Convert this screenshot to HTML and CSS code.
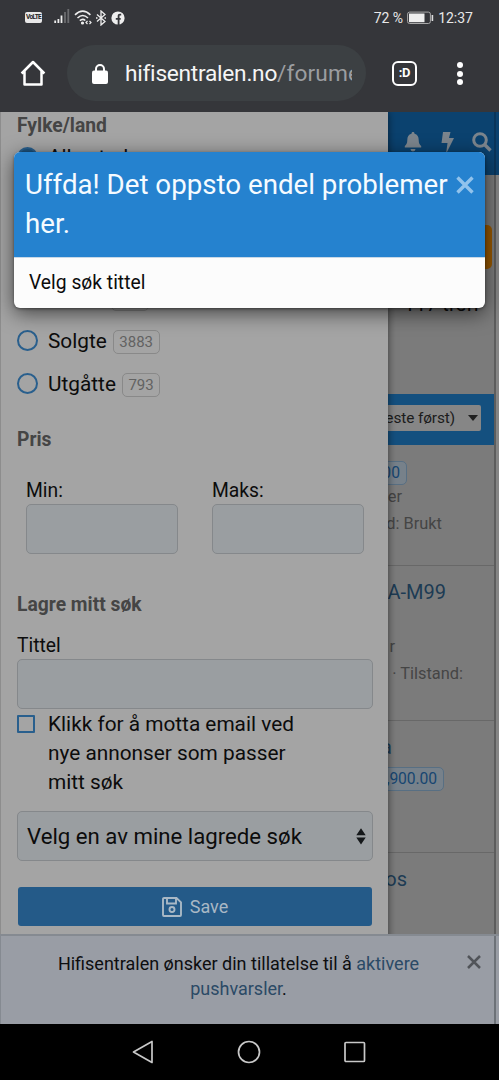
FILE: index.html
```html
<!DOCTYPE html>
<html lang="no">
<head>
<meta charset="utf-8">
<title>Hifisentralen</title>
<link rel="stylesheet" href="styles.css">
</head>
<body>
<div class="statusbar">
  <div class="status-left">
    <span class="volte">VoLTE</span>
    <svg class="signal" width="16" height="15" viewBox="0 0 16 15"><path d="M1.2 11.5v2.5M4.4 10v4M7.500 6.500V14" stroke="#eee" stroke-width="1.8"/><path d="M11 3v11M14.3 0v14" stroke="#6b6c6f" stroke-width="1.8"/></svg>
    <svg class="wifi" width="18" height="15" viewBox="0 0 18 15" fill="none" stroke="#eee" stroke-width="1.6"><path d="M1 4.8Q8.7-2.4 16.4 4.8M3.5 8Q8.7 3 14 8M5.8 10.7Q8.7 8.2 11.3 10.5"/><circle cx="8.5" cy="13" r=".8" fill="#eee"/><path d="M13.5 11l-1.5 1.5 1.5 1.5M15.5 11l1.5 1.5-1.5 1.5" stroke-width="1.2"/></svg>
    <svg class="bt" width="10" height="16" viewBox="0 0 10 16" fill="none" stroke="#eee" stroke-width="1.3"><path d="M1 4.5l8 7-4 3.5V1l4 3.5-8 7M0 8h1.5M8.5 8H10"/></svg>
    <svg class="fb" width="14" height="14" viewBox="0 0 14 14"><circle cx="7" cy="7" r="6.6" fill="#eee"/><path d="M10.2 3.6H9c-1 0-1.4.5-1.4 1.5V14M4.8 7.8h4.9" fill="none" stroke="#35363a" stroke-width="1.8"/></svg>
  </div>
  <div class="status-right">
    <span class="pct">72 %</span>
    <svg width="27" height="14" viewBox="0 0 27 14"><rect x=".6" y="1.1" width="22.8" height="11.4" rx="2" fill="none" stroke="#aaa"/><path d="M2 2.5h15.5v8.7H2z" fill="#eee"/><path d="M25.4 4v6" stroke="#ddd" stroke-width="1.6"/></svg>
    <span class="clock">12:37</span>
  </div>
</div>
<div class="toolbar">
  <svg class="home" width="26" height="27" viewBox="0 0 26 27" fill="none" stroke="#fff" stroke-width="2.5" stroke-linejoin="round"><path d="M1.6 13.5L13 2l11.4 11.5M4.5 11v13.6h17V11"/></svg>
  <div class="omnibox">
    <svg width="16" height="20" viewBox="0 0 16 20"><path d="M4 8V5a4 4 0 0 1 8 0v3" fill="none" stroke="#fff" stroke-width="2"/><rect y="6.5" width="16" height="13.5" rx="2" fill="#fff"/></svg>
    <div class="url">hifisentralen.no<span>/forume</span></div>
  </div>
  <div class="tabs">:D</div>
  <div class="dots"><i></i><i></i><i></i></div>
</div>

<main class="viewport">
  <div class="page">
    <div class="page-head">
      <svg width="18" height="20" viewBox="0 0 18 20"><path d="M9 0c1 0 1.5.7 1.5 1.7 3 .8 4.2 3 4.2 6.2 0 3.4 1 4.700 2.500 6.100v1.500H.8V14c1.500-1.400 2.500-2.700 2.500-6.100 0-3.200 1.200-5.400 4.200-6.200C7.500.7 8 0 9 0zM6.500 17h5a2.500 2.500 0 0 1-5 0z"/></svg>
      <svg width="13" height="22" viewBox="0 0 13 22"><path d="M2 0h7.500L8 6h5L5 22l1.500-11H.5z"/></svg>
      <svg width="20" height="20" viewBox="0 0 20 20" fill="none"><circle cx="8" cy="8" r="6.300" stroke="#7c858d" stroke-width="3"/><path d="M12.500 12.500l6 6" stroke="#7c858d" stroke-width="3.400"/></svg>
    </div>
    <div class="orange"></div>
    <div class="hits">117 treff</div>
    <div class="sortbar"><div class="sort"><span>este først)</span><svg width="10" height="6" viewBox="0 0 10 6"><path d="M0 0h10L5 6z" fill="#202020"/></svg></div></div>
    <article class="ad ad-a"><span class="price p1">00</span><p class="m1">er</p><p class="m2">d: Brukt</p></article>
    <article class="ad ad-b"><h3 class="t1">A-M99</h3><p class="m3">r</p><p class="m4">· Tilstand:</p></article>
    <article class="ad ad-c"><h3 class="t2">a</h3><span class="price p2">,900.00</span></article>
    <article class="ad ad-d"><h3 class="t3">os</h3></article>
  </div>
  <div class="page-edge"></div>

  <aside class="drawer">
    <h4>Fylke/land</h4>
    <div class="option first"><i class="radio on"></i><span>Alle steder</span></div>
    <div class="option third"><span class="count blank"></span></div>
    <div class="option"><i class="radio"></i><span>Solgte</span><span class="count">3883</span></div>
    <div class="option"><i class="radio"></i><span>Utgåtte</span><span class="count">793</span></div>
    <h4 class="pris">Pris</h4>
    <div class="range">
      <label>Min:<span class="field"></span></label>
      <label>Maks:<span class="field"></span></label>
    </div>
    <h4 class="save-head">Lagre mitt søk</h4>
    <label class="title-label">Tittel<span class="field"></span></label>
    <div class="check"><i class="box"></i><span>Klikk for å motta email ved<br>nye annonser som passer<br>mitt søk</span></div>
    <div class="field select"><span>Velg en av mine lagrede søk</span><svg width="10" height="17" viewBox="0 0 10 17"><path d="M.3 7.200h9.400L5 .2zM.3 9.600h9.400L5 16.600z" fill="#15181a"/></svg></div>
    <div class="save"><svg width="20" height="20" viewBox="0 0 20 20" fill="none" stroke="#a9b8c5" stroke-width="1.900"><path d="M2 1h12.500L19 5.300V18a1 1 0 0 1-1 1H2a1 1 0 0 1-1-1V2a1 1 0 0 1 1-1zM5 1v5.500h9V1"/><circle cx="10" cy="12.500" r="2.500"/></svg><span>Save</span></div>
  </aside>

  <div class="notice">
    <p>Hifisentralen ønsker din tillatelse til å <a>aktivere</a><br><a>pushvarsler</a>.</p>
    <svg width="14" height="14" viewBox="0 0 14 14"><path d="M1 1l12 12M13 1L1 13" stroke="#515459" stroke-width="2.500"/></svg>
  </div>

  <section class="modal">
    <header><h2>Uffda! Det oppsto endel problemer<br>her.</h2>
      <svg width="18" height="18" viewBox="0 0 18 18"><path d="M1.500 1.500l15 15M16.500 1.500l-15 15" stroke="#92c3ec" stroke-width="3.400"/></svg>
    </header>
    <div class="modal-body">Velg søk tittel</div>
  </section>
</main>
<nav class="navbar">
  <svg width="22" height="24" viewBox="0 0 22 24"><path d="M20 1.500v21L1.500 12z"/></svg>
  <svg width="24" height="24" viewBox="0 0 24 24"><circle cx="12" cy="12" r="10.500"/></svg>
  <svg width="22" height="22" viewBox="0 0 22 22"><rect x="1" y="1.500" width="19.500" height="19" rx="1"/></svg>
</nav>
</body>
</html>
```
FILE: styles.css
```css
* { box-sizing: border-box; }
body { margin: 0; width: 499px; height: 1080px; overflow: hidden; background: #35363a; font-family: Roboto, "Open Sans", sans-serif; font-size: 20px; color: #0c0c0c; display: flex; flex-direction: column; }
h2, h3, h4, p { margin: 0; font-weight: 400; }
svg { flex: none; display: block; }
i { display: block; flex: none; }

.statusbar { height: 35px; flex: none; display: flex; justify-content: space-between; padding: 0 26px 0 25px; color: #e8e8e8; }
.status-left, .status-right { display: flex; align-items: center; }
.volte { width: 17px; height: 11px; border-radius: 2px; background: #e8e8e8; color: #222; font-size: 6.500px; line-height: 11px; font-weight: 700; text-align: center; letter-spacing: -.6px; white-space: nowrap; }
.signal { margin-left: 12px; margin-top: -2px; }
.wifi { margin-left: 4px; }
.bt { margin-left: 4px; }
.fb { margin-left: 5px; }
.pct, .clock { white-space: nowrap; }
.pct { font-size: 14px; margin-right: 4px; }
.clock { margin-left: 4px; font-size: 14px; }

.toolbar { height: 77px; flex: none; display: flex; align-items: flex-start; padding: 10px 35px 0 20px; }
.home { margin-top: 15px; }
.omnibox { width: 299px; height: 56px; margin-left: 21px; border-radius: 28px; background: #3c4043; display: flex; align-items: center; padding-left: 25px; }
.omnibox svg { margin-top: 1px; }
.url { margin: 2px 0 0 17px; width: 227px; overflow: hidden; white-space: nowrap; font-size: 22.700px; letter-spacing: -.26px; line-height: 32px; color: #f5f5f5; }
.url span { color: #9b9da0; letter-spacing: .1px; }
.tabs { width: 25px; height: 25px; margin: 16px 0 0 26px; border: 2.500px solid #fff; border-radius: 6px; color: #fff; font-size: 13px; font-weight: 700; line-height: 20px; text-align: center; letter-spacing: -.3px; }
.dots { margin: 17px 0 0 40px; display: grid; gap: 2.500px; }
.dots i { width: 6px; height: 6px; border-radius: 50%; background: #fff; }

.viewport { position: relative; height: 912px; flex: none; overflow: hidden; background: #858585; }

.page { width: 496px; height: 912px; padding-left: 388px; overflow: hidden; background: #7b7b7b; border-right: 2px solid #5d5d5d; display: flex; flex-direction: column; }
.page-edge { position: absolute; left: 494px; top: 0; width: 5px; height: 63px; background: #0b426f; border-left: 2px solid #0a355a; }
.page-head { height: 63px; flex: none; background: #0b426f; display: flex; padding: 20px 0 0 16px; fill: #7c858d; }
.page-head svg:nth-child(2) { margin-left: 19px; }
.page-head svg:nth-child(3) { margin-left: 18px; }
.orange { align-self: flex-end; width: 30px; height: 44px; margin: 50px 2px 0 0; border-radius: 5px; background: #965700; flex: none; }
.hits { height: 26px; line-height: 26px; margin: 22px 14px 0 0; text-align: right; white-space: nowrap; flex: none; }
.sortbar { height: 51px; margin-top: 77px; padding: 11px 13px 14px 0; background: #14507f; flex: none; display: flex; }
.sort { flex: 1; min-width: 0; background: #868686; border-radius: 0 2px 2px 0; display: flex; align-items: center; justify-content: flex-end; gap: 13px; padding-right: 3px; font-size: 15.400px; letter-spacing: -.1px; white-space: nowrap; color: #1c1c1c; }
.ad { flex: none; border-bottom: 1px solid #686868; display: flex; flex-direction: column; align-items: flex-end; color: #454545; font-size: 16.400px; line-height: 26px; white-space: nowrap; }
.ad h3 { color: #1d3b54; font-size: 20px; line-height: 28px; }
.ad-a { height: 121px; }
.ad-b { height: 155px; }
.ad-c { height: 132px; }
.ad-d { height: 172px; border: 0; }
.price { height: 24px; border: 1px solid #586f83; border-radius: 5px; background: #77818a; color: #174671; font-size: 15.700px; line-height: 22px; padding: 0 6px; flex: none; }
.p1 { margin: 16px 87px 0 0; }
.m1 { margin: -1px 92px 0 0; }
.m2 { margin: 1px 52px 0 0; }
.t1 { margin-right: 48px; margin-top: 12px; }
.m3 { margin: 28px 99px 0 0; }
.m4 { margin: 1px 31px 0 0; }
.t2 { margin: 12px 102px 0 0; }
.p2 { margin: 6px 50px 0 0; letter-spacing: -.1px; }
.t3 { margin: 12px 87px 0 0; }

.drawer { position: absolute; left: 0; top: 0; width: 388px; height: 912px; padding: 0 15px 0 16px; background: #a4a4a4; border-left: 1px solid #8d8d8d; box-shadow: 0 0 8px rgba(0,0,0,.55); display: flex; flex-direction: column; }
.drawer > * { flex: none; }
.drawer h4 { height: 26px; padding-top: 1px; font-size: 19.300px; font-weight: 700; line-height: 26px; color: #454545; }
.option { height: 43px; display: flex; align-items: center; font-size: 20.800px; line-height: 30px; }
.option.first { height: 28px; margin-top: 5px; }
.option.third { margin-top: 105px; }
.radio { width: 21px; height: 21px; border: 2px solid #295f8d; border-radius: 50%; margin-right: 10px; }
.radio.on { background: #1c527e; }
.count { height: 24px; margin: 3px 0 0 6px; border: 1px solid #898989; border-radius: 5px; padding: 0 5.500px; font-size: 15px; line-height: 22px; color: #626262; }
.blank { width: 38px; margin-left: 94px; }
.drawer .pris { margin-top: 21px; }
.range { display: flex; gap: 34px; margin: 25px 0 0 9px; }
.range label { width: 152px; }
label { display: block; padding-top: 1px; font-size: 19.300px; line-height: 26px; }
.field { display: block; height: 50px; border: 1px solid #85888b; border-radius: 5px; background: #9a9ea1; }
.drawer .save-head { margin-top: 37px; }
.title-label { margin-top: 15px; }
.check { display: flex; line-height: 29px; font-size: 20.800px; margin-top: 1px; }
.box { width: 18px; height: 18px; border: 2px solid #295f8d; border-radius: 1px; margin: 5px 13px 0 0; }
.select { display: flex; align-items: center; justify-content: space-between; padding: 0 6px 0 9px; margin-top: 14px; font-size: 22.200px; line-height: 30px; white-space: nowrap; }
.save { margin: 26px 1px 0; height: 39px; border-radius: 3px; background: #245a88; display: flex; align-items: center; justify-content: center; gap: 8px; color: #a9b8c5; font-size: 18px; }

.notice { position: absolute; left: 0; right: 0; bottom: 0; height: 90px; background: #999da5; border: solid #858a91; border-width: 2px 0 0 1px; text-align: center; font-size: 18px; line-height: 25px; color: #0d0e10; box-shadow: inset -3px 0 #999da5, inset -5px 0 #6d7278; padding: 15px 18px 0 56px; display: flex; justify-content: space-between; }
.notice p { width: 363px; white-space: nowrap; }
.notice a { color: #2b4a66; }
.notice svg { margin-top: 4px; }

.modal { position: absolute; left: 14px; top: 40px; width: 471px; height: 156px; border-radius: 6px; overflow: hidden; background: #fcfcfc; box-shadow: 0 5px 20px rgba(0,0,0,.6), 0 1px 3px rgba(0,0,0,.4); }
.modal header { height: 105px; background: #2582cf; color: #f5fbff; display: flex; justify-content: space-between; padding: 14px 11px 0; }
.modal h2 { font-size: 27.700px; line-height: 38.500px; white-space: nowrap; }
.modal header svg { margin-top: 10px; }
.modal-body { border-top: 1px solid #c7d8e7; padding: 11px 15px; font-size: 19.300px; line-height: 27px; }

.navbar { height: 56px; flex: none; background: #000; display: flex; justify-content: space-between; align-items: center; padding: 0 133px 0 132px; fill: none; stroke: #c8c8c8; stroke-width: 1.700; stroke-linejoin: round; }
```
